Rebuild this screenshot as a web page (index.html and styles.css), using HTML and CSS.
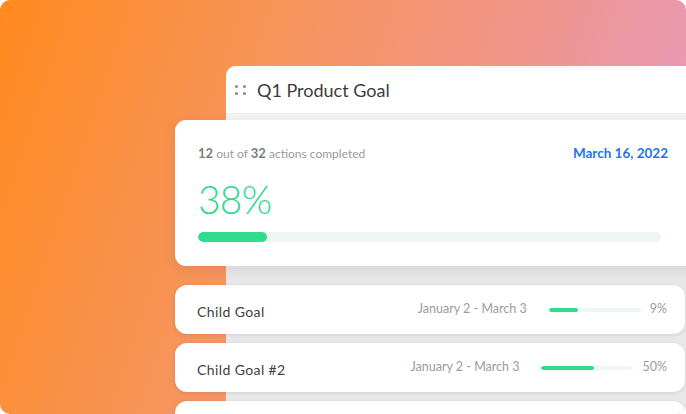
FILE: index.html
```html
<!DOCTYPE html>
<html lang="en">
<head>
    <meta charset="UTF-8">
    <meta name="viewport" content="width=device-width, initial-scale=1.0">
    <title>Q1 Product Goal</title>
    <link rel="stylesheet" href="styles.css">
</head>
<body>
    <div class="hero">
        <div class="panel">
            <div class="panel-head">
                <span class="drag">
                    <i></i><i></i><i></i><i></i>
                </span>
                <h2>Q1 Product Goal</h2>
            </div>
            <div class="panel-body">
                <div class="summary">
                    <div class="summary-top">
                        <p class="count"><b>12</b> out of <b>32</b> actions completed</p>
                        <p class="due">March 16, 2022</p>
                    </div>
                    <div class="percent">38%</div>
                    <div class="track"><div class="fill" style="width: 15%;"></div></div>
                </div>

                <div class="child">
                    <span class="child-name">Child Goal</span>
                    <span class="child-date">January 2 - March 3</span>
                    <div class="mini-track"><div class="fill" style="width: 32%;"></div></div>
                    <span class="child-pct">9%</span>
                </div>
                <div class="child">
                    <span class="child-name">Child Goal #2</span>
                    <span class="child-date">January 2 - March 3</span>
                    <div class="mini-track"><div class="fill" style="width: 57%;"></div></div>
                    <span class="child-pct">50%</span>
                </div>
                <div class="child"></div>
            </div>
        </div>
    </div>
</body>
</html>
```

FILE: styles.css
```css
body {
    margin: 0;
    background: white;
    font-family: Lato, "Open Sans", sans-serif;
}
p, h2 {
    margin: 0;
}
.hero {
    height: 414px;
    overflow: hidden;
    border-radius: 10px;
    background: linear-gradient(108deg, #ff8a1e 0%, #f7945a 35%, #f0958a 65%, #e69bcc 100%);
    padding: 66px 0 0 226px;
    box-sizing: border-box;
}
.panel {
    margin-right: -30px;
    height: 400px;
    border-radius: 10px 0 0 0;
    background: linear-gradient(#f8f8f8, #e8e8e8 45%);
}
.panel-head {
    height: 47px;
    background: white;
    border-radius: 10px 0 0 0;
    border-bottom: 1px solid #efefef;
    display: flex;
    align-items: center;
    padding-left: 9px;
}
.drag {
    display: grid;
    grid-template-columns: 3px 3px;
    gap: 4px 5px;
    margin-right: 11px;
}
.drag i {
    width: 3px;
    height: 3px;
    border-radius: 50%;
    background: #8a8a8a;
}
.panel-head h2 {
    font-size: 18px;
    font-weight: 400;
    color: #3c3c3c;
}
.panel-body {
    margin-left: -51px;
    padding-top: 6px;
}
.summary {
    background: white;
    border-radius: 11px;
    height: 146px;
    box-sizing: border-box;
    padding: 25px 42px 0 23px;
    margin-right: 6px;
    box-shadow: 0 4px 14px rgba(0, 0, 0, 0.08);
}
.summary-top {
    display: flex;
    justify-content: space-between;
    align-items: center;
}
.count {
    font-size: 12px;
    color: #9a9a9a;
}
.count b {
    color: #7d7d7d;
    font-size: 13px;
}
.due {
    font-size: 13.5px;
    font-weight: 700;
    color: #1f74ea;
}
.percent {
    font-size: 39px;
    font-weight: 300;
    color: #2fd98b;
    margin-top: 15px;
    letter-spacing: -0.8px;
}
.track {
    height: 10px;
    border-radius: 5px;
    background: #edf6f1;
    margin: 10px 7px 0 0;
    overflow: hidden;
}
.fill {
    height: 100%;
    border-radius: 5px;
    background: #2fdc8e;
}
.child {
    height: 49px;
    margin: 19px 31px 0 0;
    background: white;
    border-radius: 12px;
    box-shadow: 0 1px 4px rgba(0, 0, 0, 0.1);
    display: flex;
    align-items: center;
    padding: 0 18px 0 22px;
}
.child + .child {
    margin-top: 9px;
}
.child-name {
    flex: 1;
    font-size: 14px;
    color: #404040;
    letter-spacing: 0.4px;
    margin-top: 3px;
}
.child-date {
    font-size: 12.5px;
    color: #9c9c9c;
    margin-bottom: 3px;
}
.mini-track {
    width: 92px;
    height: 4px;
    border-radius: 2px;
    background: #edf6f1;
    margin: 0 9px 0 22px;
    overflow: hidden;
}
.child-pct {
    font-size: 12.5px;
    color: #9c9c9c;
    margin-bottom: 3px;
}
```
